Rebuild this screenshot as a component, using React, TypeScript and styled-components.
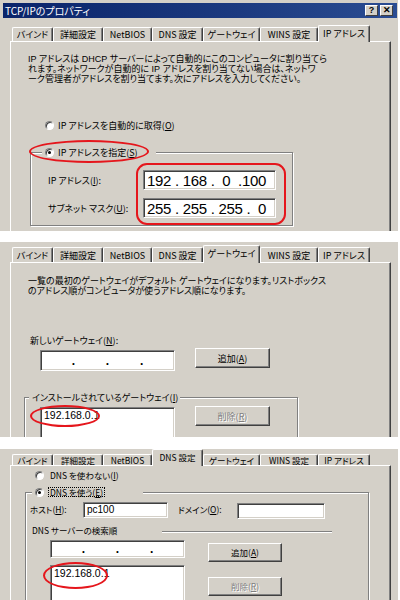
import React from 'react';
import styled, { createGlobalStyle } from 'styled-components';

const FACE = '#D4D0C8';
const SHADOW = '#808080';
const DARK = '#404040';
const RED = '#E5161C';

const GlobalStyle = createGlobalStyle`
  html, body { margin: 0; padding: 0; background: #fff; }
  body {
    font-family: "Noto Sans CJK JP", "Noto Sans", sans-serif;
    font-feature-settings: "palt";
    color: #000;
  }
  #root { width: 400px; height: 600px; overflow: hidden; }
`;

const Page = styled.div`
  display: flex;
  flex-direction: column;
  width: 400px;
  height: 600px;
  overflow: hidden;
  background: #fff;
`;

const Shot = styled.section<{ $h: number; $mt?: number; $fs: number }>`
  position: relative;
  display: flex;
  flex-direction: column;
  flex: 0 0 ${(p) => p.$h}px;
  height: ${(p) => p.$h}px;
  width: 398px;
  margin-top: ${(p) => p.$mt ?? 0}px;
  background: ${FACE};
  overflow: hidden;
  font-size: ${(p) => p.$fs}px;
  line-height: 1;
`;

const TitleBar = styled.div`
  display: flex;
  align-items: center;
  justify-content: space-between;
  height: 15px;
  margin: 3px 1px 0 3px;
  padding: 0 4px 0 2px;
  background: linear-gradient(90deg, #0a246a 0%, #1c3a80 60%, #2a4c92 100%);
  color: #fff;
  font-size: 10px;
  white-space: nowrap;
`;

const TitleButtons = styled.div`
  display: flex;
  gap: 2px;
`;

const TitleButton = styled.div`
  box-sizing: border-box;
  width: 13px;
  height: 11px;
  background: ${FACE};
  border: 1px solid;
  border-color: #fff ${DARK} ${DARK} #fff;
  color: #000;
  font-family: "Liberation Sans", sans-serif;
  font-weight: bold;
  font-size: 9px;
  display: flex;
  align-items: center;
  justify-content: center;
`;

const TabStrip = styled.div<{ $mt: number; $h: number }>`
  display: flex;
  align-items: flex-end;
  height: ${(p) => p.$h}px;
  margin: ${(p) => p.$mt}px 0 0 12px;
  position: relative;
  z-index: 2;
`;

const Tab = styled.div<{ $w: number; $h: number; $active?: boolean }>`
  box-sizing: border-box;
  width: ${(p) => p.$w}px;
  height: ${(p) => (p.$active ? p.$h + 1 : p.$h)}px;
  margin-bottom: ${(p) => (p.$active ? -1 : 0)}px;
  border-top: 1px solid #fff;
  border-left: 1px solid #fff;
  border-right: 1px solid ${DARK};
  border-radius: 2px 2px 0 0;
  box-shadow: inset -1px 0 0 ${SHADOW};
  background: ${FACE};
  display: flex;
  align-items: center;
  justify-content: center;
  white-space: nowrap;
  padding-bottom: ${(p) => (p.$active ? 2 : 0)}px;
`;

const TabPanel = styled.div`
  position: relative;
  z-index: 1;
  flex: 1;
  box-sizing: border-box;
  margin-left: 10px;
  width: 381px;
  border-top: 1px solid #fff;
  border-left: 1px solid #fff;
  border-right: 1px solid ${DARK};
  box-shadow: inset -1px 0 0 ${SHADOW};
  display: flex;
  flex-direction: column;
  align-items: flex-start;
`;

const Para = styled.div<{ $mt: number; $ml: number }>`
  display: flex;
  flex-direction: column;
  margin: ${(p) => p.$mt}px 0 0 ${(p) => p.$ml}px;
  font-family: "Liberation Sans", "Noto Sans CJK JP", sans-serif;
  font-size: 9px;
`;

const ParaLine = styled.div`
  height: 10px;
  line-height: 10px;
  white-space: nowrap;
`;

const RadioRow = styled.div<{ $mt: number; $ml: number; $gap: number }>`
  display: flex;
  align-items: center;
  height: 12px;
  gap: ${(p) => p.$gap}px;
  margin: ${(p) => p.$mt}px 0 0 ${(p) => p.$ml}px;
  white-space: nowrap;
`;

const RadioCircle = styled.span<{ $on?: boolean }>`
  box-sizing: border-box;
  flex: none;
  width: 9px;
  height: 9px;
  border-radius: 50%;
  background: #fff;
  border: 1px solid;
  border-color: ${SHADOW} #fff #fff ${SHADOW};
  box-shadow: inset 1px 1px 0 ${DARK};
  display: inline-flex;
  align-items: center;
  justify-content: center;
  &::after {
    content: '';
    width: 3px;
    height: 3px;
    border-radius: 50%;
    background: ${(p) => (p.$on ? '#000' : 'transparent')};
  }
`;

const Focus = styled.span`
  outline: 1px dotted #000;
  outline-offset: 0;
  padding: 0 1px;
`;

const Group = styled.div<{ $mt: number; $ml: number; $w: number; $h: number }>`
  box-sizing: border-box;
  flex: none;
  margin: ${(p) => p.$mt}px 0 0 ${(p) => p.$ml}px;
  width: ${(p) => p.$w}px;
  height: ${(p) => p.$h}px;
  border: 1px solid ${SHADOW};
  box-shadow: inset 1px 1px 0 #fff, 1px 1px 0 #fff;
  display: flex;
  flex-direction: column;
  align-items: flex-start;
`;

const Legend = styled.div<{ $ml: number; $w?: number; $gap?: number }>`
  box-sizing: border-box;
  display: flex;
  align-items: center;
  gap: ${(p) => p.$gap ?? 0}px;
  height: 12px;
  margin: -7px 0 0 ${(p) => p.$ml}px;
  padding: 0 2px 0 3px;
  ${(p) => (p.$w ? `width: ${p.$w}px;` : '')}
  background: ${FACE};
  white-space: nowrap;
`;

const FieldGrid = styled.div<{ $mt: number; $ml: number }>`
  display: grid;
  grid-template-columns: 95px 133px;
  grid-auto-rows: 20px;
  row-gap: 8px;
  align-items: center;
  margin: ${(p) => p.$mt}px 0 0 ${(p) => p.$ml}px;
  white-space: nowrap;
`;

const Field = styled.div<{ $w: number; $h: number; $mt?: number }>`
  box-sizing: border-box;
  flex: none;
  width: ${(p) => p.$w}px;
  height: ${(p) => p.$h}px;
  margin-top: ${(p) => p.$mt ?? 0}px;
  background: #fff;
  border: 1px solid;
  border-color: ${SHADOW} #fff #fff ${SHADOW};
  box-shadow: inset 1px 1px 0 ${DARK}, inset -1px -1px 0 ${FACE};
  display: flex;
  align-items: center;
  padding-left: 3px;
  font-family: "Liberation Sans", sans-serif;
  font-size: 10px;
  white-space: pre;
`;

const BigIp = styled.span`
  font-family: "Liberation Sans", sans-serif;
  font-size: 15px;
  letter-spacing: -0.3px;
  white-space: pre;
`;

const ListBox = styled(Field)`
  align-items: flex-start;
  padding: 2px 0 0 3px;
  font-size: 10.5px;
`;

const IpBlank = styled.div<{ $w: number; $h: number; $mt?: number }>`
  box-sizing: border-box;
  flex: none;
  width: ${(p) => p.$w}px;
  height: ${(p) => p.$h}px;
  margin-top: ${(p) => p.$mt ?? 0}px;
  background: #fff;
  border: 1px solid;
  border-color: ${SHADOW} #fff #fff ${SHADOW};
  box-shadow: inset 1px 1px 0 ${DARK}, inset -1px -1px 0 ${FACE};
  display: grid;
  grid-template-columns: 1fr auto 1fr auto 1fr auto 1fr;
  align-items: center;
  justify-items: center;
  font-family: "Liberation Sans", sans-serif;
  font-size: 12px;
  font-weight: bold;
`;

const Row = styled.div<{ $mt: number; $ml: number; $gap: number; $w?: number }>`
  display: flex;
  align-items: flex-start;
  gap: ${(p) => p.$gap}px;
  margin: ${(p) => p.$mt}px 0 0 ${(p) => p.$ml}px;
  ${(p) => (p.$w ? `width: ${p.$w}px;` : '')}
  white-space: nowrap;
`;

const Label = styled.span<{ $w?: number; $mt?: number; $ml?: number }>`
  display: inline-block;
  ${(p) => (p.$w ? `width: ${p.$w}px;` : '')}
  margin-top: ${(p) => p.$mt ?? 0}px;
  margin-left: ${(p) => p.$ml ?? 0}px;
  white-space: nowrap;
`;

const Rule = styled.div<{ $w: number }>`
  flex: none;
  margin: 5px 0 0 auto;
  width: ${(p) => p.$w}px;
  height: 1px;
  background: ${SHADOW};
  box-shadow: 0 1px 0 #fff;
`;

const Btn = styled.div<{ $w: number; $h: number; $mt?: number; $disabled?: boolean }>`
  box-sizing: border-box;
  flex: none;
  width: ${(p) => p.$w}px;
  height: ${(p) => p.$h}px;
  margin-top: ${(p) => p.$mt ?? 0}px;
  background: ${FACE};
  border: 1px solid;
  border-color: #fff ${DARK} ${DARK} #fff;
  box-shadow: inset -1px -1px 0 ${SHADOW};
  display: flex;
  align-items: center;
  justify-content: center;
  color: ${(p) => (p.$disabled ? SHADOW : '#000')};
  text-shadow: ${(p) => (p.$disabled ? '1px 1px 0 #fff' : 'none')};
`;

const RedMark = styled.div<{ $x: number; $y: number; $w: number; $h: number; $r: string }>`
  position: absolute;
  left: ${(p) => p.$x}px;
  top: ${(p) => p.$y}px;
  width: ${(p) => p.$w}px;
  height: ${(p) => p.$h}px;
  box-sizing: border-box;
  border: 2px solid ${RED};
  border-radius: ${(p) => p.$r};
  pointer-events: none;
  z-index: 5;
`;

const TABS: [string, number][] = [
  ['バインド', 41],
  ['詳細設定', 50],
  ['NetBIOS', 49],
  ['DNS 設定', 51],
  ['ゲートウェイ', 57],
  ['WINS 設定', 58],
  ['IP アドレス', 52],
];

function Tabs({ active, mt, h, tabH }: { active: number; mt: number; h: number; tabH: number }) {
  return (
    <TabStrip $mt={mt} $h={h}>
      {TABS.map(([label, w], i) => (
        <Tab key={label} $w={w} $h={i === active ? h : tabH} $active={i === active}>
          {label}
        </Tab>
      ))}
    </TabStrip>
  );
}

const Dot = () => <span>.</span>;

function EmptyIp({ w, h, mt }: { w: number; h: number; mt?: number }) {
  return (
    <IpBlank $w={w} $h={h} $mt={mt}>
      <span />
      <Dot />
      <span />
      <Dot />
      <span />
      <Dot />
      <span />
    </IpBlank>
  );
}

export default function App() {
  return (
    <>
      <GlobalStyle />
      <Page>
        {/* Shot 1: IP address */}
        <Shot $h={231} $fs={9}>
          <TitleBar>
            <span>TCP/IPのプロパティ</span>
            <TitleButtons>
              <TitleButton>?</TitleButton>
              <TitleButton>✕</TitleButton>
            </TitleButtons>
          </TitleBar>
          <Tabs active={6} mt={7} h={16} tabH={14} />
          <TabPanel>
            <Para $mt={12} $ml={17}>
              <ParaLine>IP アドレスは DHCP サーバーによって自動的にこのコンピュータに割り当てら</ParaLine>
              <ParaLine>れます。ネットワークが自動的に IP アドレスを割り当てない場合は、ネットワ</ParaLine>
              <ParaLine>ーク管理者がアドレスを割り当てます。次にアドレスを入力してください。</ParaLine>
            </Para>
            <RadioRow $mt={35} $ml={34} $gap={4}>
              <RadioCircle />
              <span>
                IP アドレスを自動的に取得(<u>O</u>)
              </span>
            </RadioRow>
            <Group $mt={21} $ml={19} $w={263} $h={74}>
              <Legend $ml={11} $w={114} $gap={4}>
                <RadioCircle $on />
                <span>
                  IP アドレスを指定(<u>S</u>)
                </span>
              </Legend>
              <FieldGrid $mt={12} $ml={17}>
                <Label>
                  IP アドレス(<u>I</u>):
                </Label>
                <Field $w={133} $h={20}>
                  <BigIp>192 . 168 .  0  .100</BigIp>
                </Field>
                <Label>
                  サブネット マスク(<u>U</u>):
                </Label>
                <Field $w={133} $h={20}>
                  <BigIp>255 . 255 . 255 .  0</BigIp>
                </Field>
              </FieldGrid>
            </Group>
          </TabPanel>
          <RedMark $x={29} $y={140} $w={120} $h={23} $r="50%" />
          <RedMark $x={136} $y={163} $w={150} $h={62} $r="11px" />
        </Shot>

        {/* Shot 2: gateway */}
        <Shot $h={195} $mt={11} $fs={9}>
          <Tabs active={4} mt={3} h={17} tabH={15} />
          <TabPanel>
            <Para $mt={13} $ml={17}>
              <ParaLine>一覧の最初のゲートウェイがデフォルト ゲートウェイになります。リストボックス</ParaLine>
              <ParaLine>のアドレス順がコンピュータが使うアドレス順になります。</ParaLine>
            </Para>
            <Row $mt={40} $ml={19} $gap={0}>
              <Label>
                新しいゲートウェイ(<u>N</u>):
              </Label>
            </Row>
            <Row $mt={3} $ml={29} $gap={20}>
              <EmptyIp w={135} h={21} mt={2} />
              <Btn $w={75} $h={20}>
                追加(<u>A</u>)
              </Btn>
            </Row>
            <Group $mt={26} $ml={13} $w={274} $h={80}>
              <Legend $ml={4} $gap={0}>
                <span>
                  インストールされているゲートウェイ(<u>I</u>)
                </span>
              </Legend>
              <Row $mt={3} $ml={15} $gap={20}>
                <ListBox $w={135} $h={40} $mt={1}>
                  192.168.0.1
                </ListBox>
                <Btn $w={75} $h={20} $disabled>
                  削除(<u>R</u>)
                </Btn>
              </Row>
            </Group>
          </TabPanel>
          <RedMark $x={30} $y={163} $w={70} $h={22} $r="50%" />
        </Shot>

        {/* Shot 3: DNS */}
        <Shot $h={151} $mt={12} $fs={8.5}>
          <Tabs active={3} mt={0} h={16} tabH={11} />
          <TabPanel>
            <RadioRow $mt={3} $ml={24} $gap={6}>
              <RadioCircle />
              <span>
                DNS を使わない(<u>I</u>)
              </span>
            </RadioRow>
            <Group $mt={11} $ml={14} $w={344} $h={140}>
              <Legend $ml={6} $w={111} $gap={5}>
                <RadioCircle $on />
                <Focus>
                  DNS を使う(<u>E</u>)
                </Focus>
              </Legend>
              <Row $mt={4} $ml={4} $gap={0}>
                <Label $w={53} $mt={3}>
                  ホスト(<u>H</u>):
                </Label>
                <Field $w={85} $h={16}>
                  pc100
                </Field>
                <Label $w={59} $mt={3} $ml={10}>
                  ドメイン(<u>O</u>):
                </Label>
                <Field $w={88} $h={16} $mt={1} />
              </Row>
              <Row $mt={7} $ml={6} $gap={0} $w={300}>
                <Label>DNS サーバーの検索順</Label>
                <Rule $w={170} />
              </Row>
              <Row $mt={5} $ml={24} $gap={23}>
                <EmptyIp w={135} h={18} />
                <Btn $w={74} $h={19} $mt={3}>
                  追加(<u>A</u>)
                </Btn>
              </Row>
              <Row $mt={3} $ml={24} $gap={23}>
                <ListBox $w={135} $h={40}>
                  192.168.0.1
                </ListBox>
                <Btn $w={74} $h={19} $mt={12} $disabled>
                  削除(<u>R</u>)
                </Btn>
              </Row>
            </Group>
          </TabPanel>
          <RedMark $x={43} $y={113} $w={65} $h={27} $r="50%" />
        </Shot>
      </Page>
    </>
  );
}
